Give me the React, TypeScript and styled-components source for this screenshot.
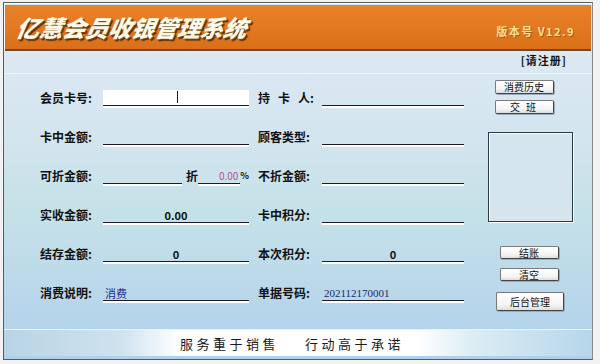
import { FC, Fragment, ReactNode } from 'react';
import styled, { createGlobalStyle } from 'styled-components';

const GlobalStyle = createGlobalStyle`
  html, body {
    margin: 0;
    padding: 0;
    background: #f2f2f2;
  }
  body {
    font-family: 'Noto Sans CJK SC', sans-serif;
  }
`;

const Window = styled.div`
  width: 590px;
  height: 358px;
  margin: 2px 0 0 3px;
  border: 1px solid #5a5a5a;
  border-right-color: #8a8a8a;
  box-shadow: inset 1px 1px 0 #ffffff;
  background: #d6e6f1;
  display: flex;
  flex-direction: column;
  box-sizing: border-box;
  overflow: hidden;
`;

const Header = styled.div`
  height: 44px;
  margin: 2px 1px 0 1px;
  background: linear-gradient(180deg, #e8822a 0%, #e37820 55%, #d96f18 100%);
  border-bottom: 2px solid #6a4a2a;
  box-shadow: 0 1px 0 #ffffff;
  display: flex;
  align-items: center;
  justify-content: space-between;
  padding: 0 16px 0 12px;
`;

const Title = styled.h1`
  margin: 0;
  font-family: 'Noto Sans CJK SC', sans-serif;
  font-size: 23px;
  font-weight: 900;
  font-style: italic;
  color: #fffbe8;
  transform: skewX(-10deg);
  text-shadow: 1px 1px 0 #7a4a1a, 2px 2px 1px #4a2a10;
`;

const Version = styled.span`
  margin-top: 8px;
  font-family: 'Noto Sans CJK SC', sans-serif;
  font-size: 11px;
  font-weight: 700;
  color: #fbe0a0;
  letter-spacing: 1.5px;
  text-shadow: 1px 1px 0 #b05a10;
`;

const Body = styled.div`
  flex: 1;
  display: flex;
  flex-direction: column;
  background: linear-gradient(180deg, #dce9f3 0%, #d2e4ee 30%, #c6e2e8 50%, #bcd9ea 75%, #aed0ec 100%);
`;

const RegisterRow = styled.div`
  display: flex;
  justify-content: flex-end;
  padding: 2px 25px 0 0;
  height: 16px;
  line-height: 14px;
  font-family: 'Noto Sans CJK SC', sans-serif;
  font-size: 11px;
  font-weight: 700;
  letter-spacing: 1px;
  color: #111;
`;

const Panel = styled.div`
  flex: 1;
  display: flex;
  margin-top: 4px;
  border-top: 1px solid #eef6fb;
  padding: 0 0 0 36px;
`;

const Form = styled.div`
  display: grid;
  grid-template-columns: 63px 146px 73px 142px;
  grid-auto-rows: 39px;
  padding-top: 4px;
  width: 424px;
`;

const Cell = styled.div<{ $pad?: number }>`
  display: flex;
  align-items: center;
  padding-left: ${(p) => p.$pad ?? 0}px;
`;

const Label = styled.span<{ $size?: number; $gap?: number }>`
  font-family: 'Noto Sans CJK SC', sans-serif;
  font-size: ${(p) => p.$size ?? 12}px;
  font-weight: 700;
  color: #111;
  white-space: nowrap;
  margin-left: ${(p) => p.$gap ?? 0}px;
  width: ${(p) => (p.$gap ? '12px' : 'auto')};
`;

const Spaced = styled.span`
  letter-spacing: 8px;
`;

const Field = styled.div<{ $align?: string; $white?: boolean; $width?: number }>`
  height: 15px;
  width: ${(p) => (p.$width ? `${p.$width}px` : '100%')};
  border-bottom: 1px solid #1a1a2a;
  box-shadow: 0 2px 0 #ffffff;
  background: ${(p) => (p.$white ? '#ffffff' : 'transparent')};
  display: flex;
  align-items: flex-end;
  justify-content: ${(p) => p.$align ?? 'flex-start'};
  line-height: 12px;
  position: relative;
`;

const Value = styled.span<{ $tone?: string; $serif?: boolean; $light?: boolean; $size?: number }>`
  font-family: ${(p) => (p.$serif ? "'Liberation Serif', serif" : "'Noto Sans CJK SC', sans-serif")};
  font-weight: ${(p) => (p.$serif || p.$light ? 400 : 700)};
  color: ${(p) => p.$tone ?? '#111'};
  font-size: ${(p) => p.$size ?? 11}px;
  padding: 0 2px 1px;
`;

const Caret = styled.span`
  position: absolute;
  left: 74px;
  top: 1px;
  width: 1px;
  height: 12px;
  background: #222;
`;

const Side = styled.div`
  width: 86px;
  margin-left: 23px;
  display: flex;
  flex-direction: column;
  align-items: center;
  padding-top: 6px;
`;

const Button = styled.button<{ $w?: number; $h?: number; $top?: number; $shift?: number; $spaced?: boolean }>`
  width: ${(p) => p.$w ?? 59}px;
  height: ${(p) => p.$h ?? 14}px;
  margin-top: ${(p) => p.$top ?? 0}px;
  margin-left: ${(p) => p.$shift ?? 0}px;
  padding: 0;
  background: linear-gradient(180deg, #ffffff 0%, #f4f4f4 70%, #dcdcdc 100%);
  border: 1px solid #7a7a7a;
  border-right-color: #444;
  border-bottom-color: #444;
  border-radius: 2px;
  font-family: 'Noto Sans CJK SC', sans-serif;
  font-size: 10px;
  line-height: 10px;
  color: #111;
  letter-spacing: ${(p) => (p.$spaced ? '2px' : '0')};
  box-shadow: 1px 1px 0 #9ab;
`;

const Photo = styled.div`
  width: 83px;
  height: 88px;
  margin-top: 18px;
  border: 1px solid #2a3a4a;
  box-shadow: inset 1px 1px 0 #ffffff, 1px 1px 0 #ffffff;
  background: #d4e5ee;
`;

const Footer = styled.div`
  height: 26px;
  border-top: 1px solid #e8f4fb;
  margin-bottom: 3px;
  background: linear-gradient(90deg, #b8d4e4 0%, #cfe2ee 20%, #ffffff 30%, #ffffff 70%, #dbecf4 80%, #b6d6ea 100%);
  display: flex;
  align-items: center;
  justify-content: center;
  gap: 26px;
  padding-right: 12px;
  font-family: 'Noto Sans CJK SC', sans-serif;
  font-size: 13px;
  color: #1a1a1a;
  letter-spacing: 3.5px;
`;

type Row = {
  left: string;
  right: ReactNode;
  leftValue?: ReactNode;
  rightValue?: ReactNode;
  leftAlign?: string;
  rightAlign?: string;
  leftWhite?: boolean;
  discount?: boolean;
};

const rows: Row[] = [
  {
    left: '会员卡号:',
    right: (
      <>
        <Spaced>持卡</Spaced>人:
      </>
    ),
    leftWhite: true,
  },
  { left: '卡中金额:', right: '顾客类型:' },
  { left: '可折金额:', right: '不折金额:', discount: true },
  { left: '实收金额:', right: '卡中积分:', leftValue: <Value>0.00</Value>, leftAlign: 'center' },
  {
    left: '结存金额:',
    right: '本次积分:',
    leftValue: <Value>0</Value>,
    leftAlign: 'center',
    rightValue: <Value>0</Value>,
    rightAlign: 'center',
  },
  {
    left: '消费说明:',
    right: '单据号码:',
    leftValue: (
      <Value $tone="#1a2a8a" $light>
        消费
      </Value>
    ),
    rightValue: (
      <Value $serif $tone="#1a2a6a">
        202112170001
      </Value>
    ),
  },
];

const DiscountCell: FC = () => (
  <Cell>
    <Field $width={82} />
    <Label $gap={4}>折</Label>
    <Field $width={44} $align="flex-end">
      <Value $tone="#c04aa0" $light $size={10}>
        0.00
      </Value>
    </Field>
    <Label $size={9}>%</Label>
  </Cell>
);

const App: FC = () => {
  return (
    <>
      <GlobalStyle />
      <Window>
        <Header>
          <Title>亿慧会员收银管理系统</Title>
          <Version>版本号 V12.9</Version>
        </Header>
        <Body>
          <RegisterRow>[请注册]</RegisterRow>
          <Panel>
            <Form>
              {rows.map((row) => (
                <Fragment key={row.left}>
                  <Cell>
                    <Label>{row.left}</Label>
                  </Cell>
                  {row.discount ? (
                    <DiscountCell />
                  ) : (
                    <Cell>
                      <Field $white={row.leftWhite} $align={row.leftAlign}>
                        {row.leftWhite && <Caret />}
                        {row.leftValue}
                      </Field>
                    </Cell>
                  )}
                  <Cell $pad={9}>
                    <Label>{row.right}</Label>
                  </Cell>
                  <Cell>
                    <Field $align={row.rightAlign}>{row.rightValue}</Field>
                  </Cell>
                </Fragment>
              ))}
            </Form>
            <Side>
              <Button $shift={-12}>消费历史</Button>
              <Button $shift={-12} $top={6} $spaced>
                交 班
              </Button>
              <Photo />
              <Button $h={13} $top={24} $shift={-2}>
                结账
              </Button>
              <Button $h={13} $top={9} $shift={-2}>
                清空
              </Button>
              <Button $w={68} $h={19} $top={11}>
                后台管理
              </Button>
            </Side>
          </Panel>
          <Footer>
            <span>服务重于销售</span>
            <span>行动高于承诺</span>
          </Footer>
        </Body>
      </Window>
    </>
  );
};

export default App;
